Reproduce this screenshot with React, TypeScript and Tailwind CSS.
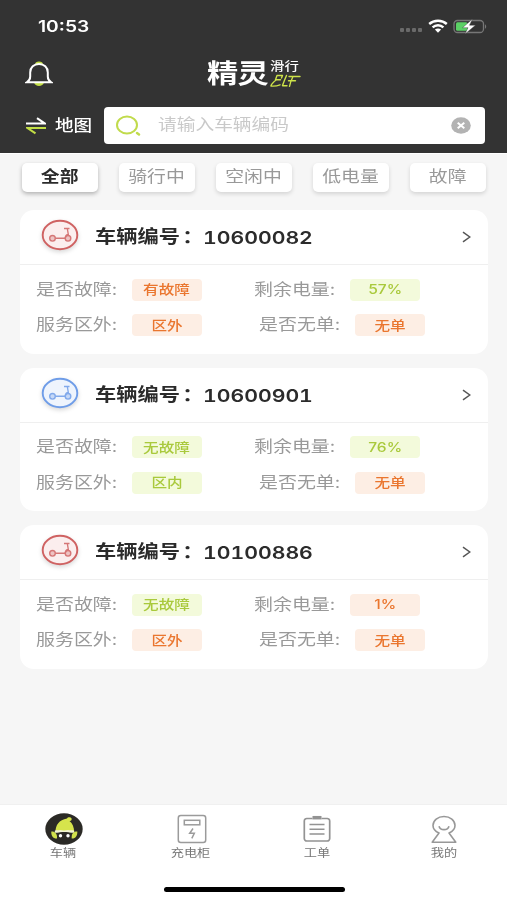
import { useState, type ReactNode } from "react";
import clsx from "clsx";

type Tone = "orange" | "green";

interface Tag {
  text: string;
  tone: Tone;
}

interface Vehicle {
  id: string;
  color: "red" | "blue";
  fault: Tag;
  battery: Tag;
  area: Tag;
  order: Tag;
}

const filters = ["全部", "骑行中", "空闲中", "低电量", "故障"];

const noOrder: Tag = { text: "无单", tone: "orange" };

const vehicles: Vehicle[] = [
  {
    id: "10600082",
    color: "red",
    fault: { text: "有故障", tone: "orange" },
    battery: { text: "57%", tone: "green" },
    area: { text: "区外", tone: "orange" },
    order: noOrder,
  },
  {
    id: "10600901",
    color: "blue",
    fault: { text: "无故障", tone: "green" },
    battery: { text: "76%", tone: "green" },
    area: { text: "区内", tone: "green" },
    order: noOrder,
  },
  {
    id: "10100886",
    color: "red",
    fault: { text: "无故障", tone: "green" },
    battery: { text: "1%", tone: "orange" },
    area: { text: "区外", tone: "orange" },
    order: noOrder,
  },
];

// Wide lettering: the glyphs are stretched horizontally
function Wide({ children, className }: { children: ReactNode; className?: string }) {
  return (
    <span className={clsx("inline-block whitespace-nowrap scale-x-120", className)}>
      {children}
    </span>
  );
}

function StatusBar() {
  return (
    <div className="flex h-[52px] items-center justify-between pl-[38px] pr-5">
      <Wide className="origin-left text-base font-semibold leading-none text-white">10:53</Wide>
      <div className="flex items-center">
        <div className="mr-1.5 mt-2 flex gap-[2px]">
          {[0, 1, 2, 3].map((i) => (
            <span key={i} className="h-1 w-1 rounded-[1px] bg-[#6a6a6a]" />
          ))}
        </div>
        <svg width="20" height="14" viewBox="0 0 20 14" fill="none" stroke="#fff" strokeWidth="2.4">
          <path d="M1.2 5C6 .6 14 .6 18.8 5" />
          <path d="M4.6 8.4c3-2.9 7.8-2.9 10.8 0" />
          <path d="M6.9 10.6c1.8-1.6 4.4-1.6 6.2 0L10 13.7z" fill="#fff" stroke="none" />
        </svg>
        <svg className="ml-[5px]" width="34" height="15" viewBox="0 0 34 15" fill="none">
          <rect x="1" y="1.5" width="29.5" height="12" rx="3.5" stroke="#777" strokeWidth="1.3" />
          <path d="M32 5.2v4.6c1.6-.7 1.6-3.9 0-4.6z" fill="#777" />
          <rect x="3" y="3.2" width="11.5" height="8.6" rx="1.5" fill="#5bd065" />
          <path d="M19.500 0L9.500 8.700h5.500L12 15 22.500 6.200h-6z" fill="#fff" stroke="#333" strokeWidth=".4" />
        </svg>
      </div>
    </div>
  );
}

function BellIcon() {
  return (
    <svg width="28" height="26" viewBox="0 0 28 26" fill="none">
      <ellipse cx="14" cy="3" rx="3.8" ry="2.600" fill="#c2de45" />
      <path d="M9 21.500h10c-.600 2.200-2.600 3.500-5 3.500s-4.400-1.300-5-3.500z" fill="#c2de45" />
      <path
        d="M1.800 21.300c2.400-1.500 3.400-3.200 3.400-5.900v-4C5.200 6.400 9 3 14 3s8.800 3.400 8.800 8.400v4c0 2.700 1 4.400 3.400 5.900z"
        fill="#333"
        stroke="#fff"
        strokeWidth="2"
      />
    </svg>
  );
}

function Logo() {
  return (
    <div className="flex h-7 w-[94px] items-center">
      <div className="w-[64px]">
        <Wide className="origin-left text-[26px] font-bold leading-7 tracking-[-0.5px] text-white">精灵</Wide>
      </div>
      <div className="flex flex-col">
        <Wide className="origin-left text-xs font-medium leading-[14px] text-white">滑行</Wide>
        <svg width="31" height="14" viewBox="0 0 31 14" fill="none" stroke="#cde24a" strokeWidth="1.4" strokeLinecap="round" strokeLinejoin="round">
          <path d="M7 1.500h5.500L11.500 4M7 1.500L5.500 5.700h5M6.500 5.700C4 7.500 1.500 9.800.9 12c3.500.3 6.800-.3 9.100-1.200" />
          <path d="M16.500 1.500C15 5 13.500 8.500 12.500 11.700H17" />
          <path d="M19 2.500h11M23 2.500c-1.500 3-2.800 6.500-3.500 9.800M18.500 6.700h7" />
        </svg>
      </div>
    </div>
  );
}

function Header() {
  return (
    <header className="h-[153px] bg-[#333]">
      <StatusBar />
      <div className="grid h-[44px] grid-cols-[1fr_auto_1fr] items-center px-[25px]">
        <BellIcon />
        <Logo />
      </div>
      <div className="mt-[11px] flex h-[37px] items-center pl-[26px] pr-[22px]">
        <svg width="20" height="18" viewBox="0 0 20 18" fill="none" strokeWidth="2">
          <path d="M0 6.600h19L11 1.100" stroke="#fff" />
          <path d="M20 11H1.500l8 5.300" stroke="#c2de45" />
        </svg>
        <div className="ml-[9px] w-[49px] pb-0.5">
          <Wide className="origin-left text-[15.500px] font-medium leading-none text-white">地图</Wide>
        </div>
        <div className="flex h-[37px] flex-1 items-center rounded-[4px] bg-white pl-3 pr-[14px]">
          <svg width="25" height="21" viewBox="0 0 25 21" fill="none" stroke="#c1db4c" strokeLinecap="round">
            <ellipse cx="11" cy="10" rx="10" ry="8.500" strokeWidth="2" />
            <path d="M21 18l2 1.500" strokeWidth="2.400" />
          </svg>
          <div className="ml-[17px] flex-1 pb-[3px]">
            <Wide className="origin-left text-[15.600px] leading-none text-[#c9c9c9]">请输入车辆编码</Wide>
          </div>
          <svg width="20" height="17" viewBox="0 0 20 17">
            <ellipse cx="10" cy="8.500" rx="9.800" ry="8.200" fill="#b3b3b3" />
            <path d="M6.700 5.700l6.600 5.600m0-5.600l-6.600 5.600" stroke="#fff" strokeWidth="2" />
          </svg>
        </div>
      </div>
    </header>
  );
}

function ScooterBadge({ color }: { color: Vehicle["color"] }) {
  const red = color === "red";
  const stroke = red ? "#cf6262" : "#6f9de8";
  const wheel = red ? "#ecbcbc" : "#bfd4f6";
  return (
    <svg
      className="drop-shadow-[0_2px_2px_rgba(0,0,0,0.15)]"
      width="38"
      height="32"
      viewBox="0 0 38 32"
      fill="none"
      stroke={stroke}
    >
      <ellipse cx="19" cy="16" rx="17.300" ry="14.200" fill={red ? "#fbeeee" : "#eef4fd"} strokeWidth="1.900" />
      <g strokeWidth="1.400" opacity=".85">
        <circle cx="11.500" cy="19.300" r="2.800" fill={wheel} />
        <circle cx="27" cy="19.300" r="2.800" fill={wheel} />
        <path d="M14.300 19.300h10M24.300 19c.2-2 1.300-3.500 3.300-3.800M23 9.500h5.500M26.300 9.500l1.200 7" />
      </g>
    </svg>
  );
}

function Pill({ tag }: { tag: Tag }) {
  return (
    <span
      className={clsx(
        "flex h-[22px] w-[70px] items-center justify-center rounded-[4px] text-[13px] font-medium leading-none",
        tag.tone === "orange" ? "bg-[#fdeee4] text-[#ea762f]" : "bg-[#f3fadb] text-[#a9c93c]"
      )}
    >
      <Wide>{tag.text}</Wide>
    </span>
  );
}

function Field({ label, tag }: { label: string; tag: Tag }) {
  return (
    <div className="flex items-center">
      <div className="w-[96px] text-[15.800px] leading-[22px] text-[#999]">
        <Wide className="origin-left">{label}:</Wide>
      </div>
      <Pill tag={tag} />
    </div>
  );
}

function VehicleCard({ vehicle }: { vehicle: Vehicle }) {
  return (
    <section className="h-[143.500px] rounded-[14px] bg-white">
      <div className="flex h-[55px] items-center border-b border-[#efefef] pl-[21px] pr-[17px] text-[#2b2b2b]">
        <div className="-mt-1">
          <ScooterBadge color={vehicle.color} />
        </div>
        <div className="ml-4 w-[108px]">
          <Wide className="origin-left text-[17.700px] font-bold leading-none">
            车辆编号<span className="ml-[2px]">：</span>
          </Wide>
        </div>
        <div className="flex-1 pt-[2px]">
          <Wide className="origin-left text-[17.700px] font-semibold leading-none tabular-nums">{vehicle.id}</Wide>
        </div>
        <svg width="9" height="12" viewBox="0 0 9 12" fill="none" stroke="#555" strokeWidth="1.500">
          <path d="M1 1.200L7.800 6 1 10.800" />
        </svg>
      </div>
      <div className="flex flex-col gap-[13.500px] pl-4 pt-[13.500px]">
        <div className="flex gap-[52px]">
          <Field label="是否故障" tag={vehicle.fault} />
          <Field label="剩余电量" tag={vehicle.battery} />
        </div>
        <div className="flex gap-[57px]">
          <Field label="服务区外" tag={vehicle.area} />
          <Field label="是否无单" tag={vehicle.order} />
        </div>
      </div>
    </section>
  );
}

function ElfIcon() {
  return (
    <svg className="ml-0.5" width="38" height="32" viewBox="0 0 38 32">
      <ellipse cx="19" cy="16" rx="18.700" ry="15.700" fill="#2b2a26" />
      <path d="M10.500 19C10.500 12 14 7 22 5.500c.5-1.700 3.700-1.800 4.500-.2.700 1.700-.7 3-2 2.700 3 2.500 4.500 6 4.700 11z" fill="#d6e44c" />
      <path d="M9.800 17.800c1.700-1.200 3.500-.2 5.200-.8 2.500.6 5.500.6 8 0 2 .6 4-.2 6.200.8v2H9.800z" fill="#f2f4d4" />
      <path d="M6.300 18.500c3.500-.3 6 2 6 7-4 .5-6.300-2.500-6-7zM32.300 18.500c-3.500-.3-6 2-6 7 4 .5 6.300-2.500 6-7z" fill="#d0e04c" />
      <path d="M12 20c4-1.500 10.500-1.500 14.500 0v6.500H12z" fill="#2b2a26" />
      <circle cx="15.500" cy="22.800" r="1.700" fill="#fff" />
      <circle cx="23" cy="22.800" r="1.700" fill="#fff" />
    </svg>
  );
}

function CabinetIcon() {
  return (
    <svg className="ml-[3px]" width="30" height="30" viewBox="0 0 30 30" fill="none" stroke="#9b9b9b" strokeWidth="1.500">
      <rect x="1.300" y="1.500" width="27.400" height="27" rx="2.500" />
      <rect x="7.300" y="6.300" width="15.500" height="4.500" />
      <path d="M16 14.500l-3.300 4.800h4.600l-2.500 5" />
    </svg>
  );
}

function OrderIcon() {
  return (
    <svg width="28" height="28" viewBox="0 0 28 28" fill="none" stroke="#939393" strokeWidth="1.700">
      <path d="M9.500 3.500H4A2.500 2.500 0 0 0 1.300 6v17.500A2.500 2.500 0 0 0 4 26h20a2.500 2.500 0 0 0 2.700-2.500V6A2.500 2.500 0 0 0 24 3.500h-5.500" />
      <path d="M9.500 2.700h9" strokeWidth="3.500" />
      <path d="M6.500 9.500h15M6.500 14.200h15M6.500 19h15" strokeWidth="1.500" />
    </svg>
  );
}

function MineIcon() {
  return (
    <svg width="26" height="29" viewBox="0 0 26 29" fill="none" stroke="#989898" strokeWidth="1.600" strokeLinejoin="round">
      <path d="M8 18C4.200 16.300 2 13.800 2 10.500 2 5.500 6.800 1.500 13 1.500s11 4 11 9c0 3.300-2.200 5.800-6 7.500l6.800 9.200H1.200z" />
      <path d="M8 11.200c1.300 4.600 8.700 4.600 10 0" />
    </svg>
  );
}

const navItems = [
  { label: "车辆", icon: <ElfIcon /> },
  { label: "充电柜", icon: <CabinetIcon /> },
  { label: "工单", icon: <OrderIcon /> },
  { label: "我的", icon: <MineIcon /> },
];

function BottomNav() {
  return (
    <nav className="flex h-[96px] flex-col items-center border-t border-[#f0f0f0] bg-white">
      <div className="grid w-full grid-cols-4">
        {navItems.map((item) => (
          <button key={item.label} className="flex flex-col items-center pt-2 text-[11px] leading-none text-[#777]">
            <span className="flex h-8 items-center">{item.icon}</span>
            <Wide className="mt-[3px]">{item.label}</Wide>
          </button>
        ))}
      </div>
      <div className="mb-[8px] ml-px mt-auto h-[5px] w-[181px] rounded-full bg-black" />
    </nav>
  );
}

export default function App() {
  const [active, setActive] = useState("全部");

  return (
    <div className="flex h-[900px] w-[507px] flex-col overflow-hidden bg-[#f6f6f6] font-['Inter','Noto_Sans_CJK_SC',sans-serif]">
      <Header />
      <main className="flex-1 border-t border-white">
        <div className="flex justify-between pl-[22px] pr-[21px] pt-[9px]">
          {filters.map((name) => (
            <button
              key={name}
              onClick={() => setActive(name)}
              className={clsx(
                "flex h-[29px] w-[76px] items-center justify-center rounded-[5px] bg-white pb-px text-[15.700px] leading-none",
                name === active
                  ? "font-bold text-[#2b2b2b] shadow-[0_2px_4px_rgba(0,0,0,0.28)]"
                  : "text-[#999] shadow-[0_2px_4px_rgba(0,0,0,0.14)]"
              )}
            >
              <Wide>{name}</Wide>
            </button>
          ))}
        </div>
        <div className="mt-[18px] flex flex-col gap-[14px] pl-5 pr-[19px]">
          {vehicles.map((v) => (
            <VehicleCard key={v.id} vehicle={v} />
          ))}
        </div>
      </main>
      <BottomNav />
    </div>
  );
}
